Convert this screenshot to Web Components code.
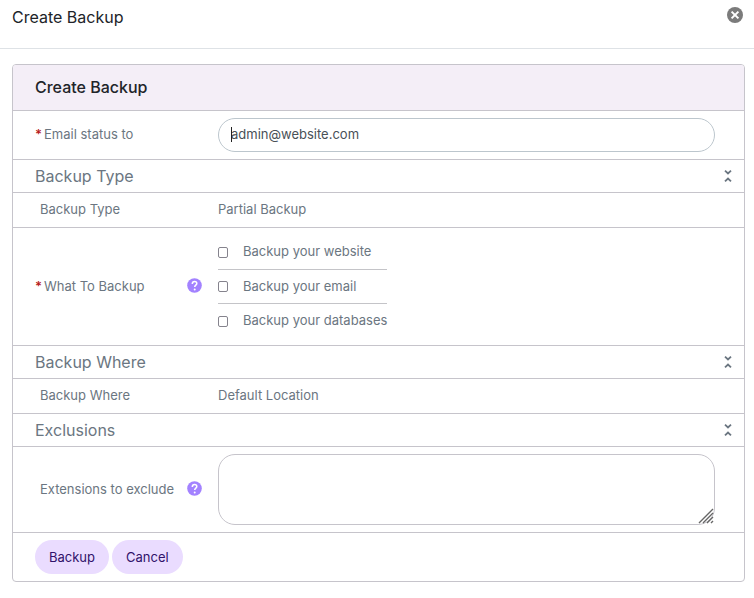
<!DOCTYPE html>
<html lang="en">
<head>
<meta charset="utf-8">
<meta name="viewport" content="width=device-width, initial-scale=1">
<title>Create Backup</title>
<style>
  body { margin: 0; background: #fff; color: #6b7681; font: 13px/20px Inter, "Liberation Sans", sans-serif;
    --line: #c6c4cb; --purple: #a382ff; }
</style>
</head>
<body>
<backup-dialog></backup-dialog>

<script>
const define = (name, html) => customElements.define(name, class extends HTMLElement {
  constructor() {
    super();
    const t = document.createElement('template');
    t.innerHTML = html;
    this.attachShadow({ mode: 'open' }).append(t.content.cloneNode(true));
  }
});

define('dialog-header', `
  <style>
    :host { display: flex; justify-content: space-between; align-items: flex-start; height: 48px;
      padding: 0 11px 0 12px; border-bottom: 1px solid #dee2e6; color: #212429; }
    h1 { margin: 0; padding-top: 7px; font-size: 16px; line-height: 20px; font-weight: 400; }
    button { display: block; margin: 7px 0 0; padding: 0; border: 0; background: none; cursor: pointer; }
    svg { display: block; }
  </style>
  <h1><slot></slot></h1>
  <button type="button" aria-label="Close">
    <svg width="16" height="16" viewBox="0 0 16 16"><circle cx="8" cy="8" r="8" fill="#7b7b7b"/>
      <path d="M4.6 4.6l6.8 6.8M11.4 4.6l-6.8 6.8" stroke="#fff" stroke-width="2"/></svg>
  </button>`);

define('form-card', `
  <style>
    :host { display: block; border: 1px solid var(--line); border-radius: 4px; overflow: hidden; }
    h2 { margin: 0; padding: 12px 22px 13px; background: #f4eef7; color: #212429;
      font-size: 16px; line-height: 20px; font-weight: 500; }
  </style>
  <h2><slot name="title"></slot></h2>
  <slot></slot>`);

define('form-section', `
  <style>
    :host { display: flex; align-items: center; justify-content: space-between; height: 32px;
      padding: 0 12px 0 22px; border-top: 1px solid var(--line); }
    h3 { margin: 0; font-size: 16px; line-height: 20px; font-weight: 400; }
    button { margin: 0; padding: 0; border: 0; background: none; color: inherit; cursor: pointer; }
    svg { display: block; }
  </style>
  <h3><slot></slot></h3>
  <button type="button" aria-label="Collapse section">
    <svg width="8" height="14" viewBox="0 0 8 14" fill="none" stroke="currentColor" stroke-width="1.8">
      <path d="M1 1.6l3 2.8L7 1.6M1 12.4l3-2.8 3 2.8"/></svg>
  </button>`);

define('help-tip', `
  <style>
    :host { display: block; padding-bottom: 2px; }
    button { display: block; padding: 0; border: 0; background: none; cursor: help; }
    svg { display: block; }
  </style>
  <button type="button" aria-label="Help">
    <svg width="15" height="15" viewBox="0 0 15 15"><circle cx="7.5" cy="7.5" r="7.3" fill="#a382ff"/>
      <path d="M5.3 5.9c0-1.6 1-2.5 2.3-2.5s2.2.8 2.2 2c0 1.7-2.1 1.7-2.1 3.5" fill="none" stroke="#fff" stroke-width="1.5"/>
      <circle cx="7.7" cy="11.4" r="1" fill="#fff"/></svg>
  </button>`);

define('form-row', `
  <style>
    :host { display: grid; grid-template-columns: 167px minmax(0, 1fr); column-gap: 16px; align-items: center;
      padding: 7px 29px 7px 22px; border-top: 1px solid var(--line); }
    .label { display: flex; align-items: center; justify-content: space-between; }
    .name { display: flex; padding: 0 0 2px 5px; line-height: 18px; }
    .star { display: none; color: #b71c1c; font-weight: 600; }
    :host([required]) .name { gap: 2px; padding-left: 0; }
    :host([required]) .star { display: block; }
    .field ::slotted(span), slot:not([name])::slotted(span) { display: block; line-height: 18px; padding-bottom: 2px; }
  </style>
  <div class="label"><div class="name"><span class="star">*</span><slot name="label"></slot></div><slot name="help"></slot></div>
  <div class="field"><slot></slot></div>`);

define('text-field', `
  <style>
    :host { display: block; position: relative; }
    ::slotted(.caret) { position: absolute; left: 13px; top: 9px; width: 1px; height: 15px; background: #222; }
    ::slotted(svg) { position: absolute; right: 1px; bottom: 1px; pointer-events: none; }
  </style>
  <slot></slot>`);

define('check-list', `
  <style>:host { display: inline-block; vertical-align: top; }</style>
  <slot></slot>`);

define('check-option', `
  <style>
    :host { display: block; height: 34px; }
    :host(:not(:first-child)) { border-top: 1px solid #c4c4c8; }
    :host(:nth-child(2)) { height: 33px; }
    label { display: flex; align-items: center; height: 100%; gap: 15px; }
    input { appearance: none; box-sizing: border-box; width: 10px; height: 11px; margin: 0;
      border: 1px solid #85838d; border-radius: 2px; background: #fff; }
    input:checked { background: var(--purple); }
    span { line-height: 18px; padding-bottom: 2px; }
  </style>
  <label><input type="checkbox"><span><slot></slot></span></label>`);

define('action-bar', `
  <style>
    :host { display: flex; gap: 3px; padding: 7px 22px; border-top: 1px solid var(--line); }
    ::slotted(button) { padding: 7px 14px; border: 0; border-radius: 17px; background: #eadcff; color: #31126b;
      font: inherit; cursor: pointer; }
  </style>
  <slot></slot>`);

define('backup-dialog', `
  <style>
    :host { display: block; }
    form { padding: 15px 9px 16px 12px; }
    input, textarea { display: block; box-sizing: border-box; width: 100%; margin: 0; padding: 5px 12px 7px;
      border: 1px solid #c6c4cb; border-radius: 17px; background: #fff; color: #495057; font: inherit; outline: 0; }
    input { border-color: #bcc6cd; }
    textarea { height: 71px; resize: none; }
  </style>
  <dialog-header>Create Backup</dialog-header>
  <form>
    <form-card>
      <span slot="title">Create Backup</span>
      <form-row required>
        <label slot="label" for="email">Email status to</label>
        <text-field><input id="email" type="email" value="admin@website.com" required><span class="caret"></span></text-field>
      </form-row>
      <form-section>Backup Type</form-section>
      <form-row><span slot="label">Backup Type</span><span>Partial Backup</span></form-row>
      <form-row required>
        <span slot="label">What To Backup</span><help-tip slot="help"></help-tip>
        <check-list role="group" aria-label="What To Backup">
          <check-option>Backup your website</check-option>
          <check-option>Backup your email</check-option>
          <check-option>Backup your databases</check-option>
        </check-list>
      </form-row>
      <form-section>Backup Where</form-section>
      <form-row><span slot="label">Backup Where</span><span>Default Location</span></form-row>
      <form-section>Exclusions</form-section>
      <form-row>
        <label slot="label" for="ext">Extensions to exclude</label><help-tip slot="help"></help-tip>
        <text-field><textarea id="ext"></textarea>
          <svg width="16" height="16" viewBox="0 0 16 16" stroke="#666" stroke-width="1.4"><path d="M1 15L15 1M5 15L15 5M9 15L15 9M13 15l2-2"/></svg>
        </text-field>
      </form-row>
      <action-bar><button type="button">Backup</button><button type="button">Cancel</button></action-bar>
    </form-card>
  </form>`);
</script>
</body>
</html>
